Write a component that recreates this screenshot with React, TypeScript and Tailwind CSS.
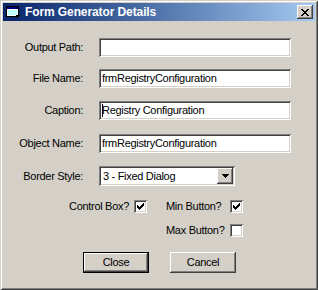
const sunken =
  'shadow-[inset_1px_1px_0_#808080,inset_-1px_-1px_0_#ffffff,inset_2px_2px_0_#404040,inset_-2px_-2px_0_#d4d0c8]';
const raised =
  'shadow-[inset_-1px_-1px_0_#404040,inset_1px_1px_0_#ffffff,inset_-2px_-2px_0_#808080,inset_2px_2px_0_#d4d0c8]';

// pixel-art glyph -> svg path
function pixels(rows: string[]) {
  let d = '';
  rows.forEach((row, y) => {
    row.split('').forEach((c, x) => {
      if (c === 'X') d += `M${x} ${y}h1v1h-1z`;
    });
  });
  return d;
}

const CHECK = pixels([
  '......X',
  '.....XX',
  'X...XXX',
  'XX.XXX.',
  'XXXXX..',
  '.XXX...',
  '..X....',
]);

const CLOSE_X = pixels([
  'XX....XX',
  '.XX..XX.',
  '..XXXX..',
  '...XX...',
  '..XXXX..',
  '.XX..XX.',
  'XX....XX',
]);

const ARROW = pixels(['XXXXXXX', '.XXXXX.', '..XXX..', '...X...']);

function Checkbox({ checked }: { checked: boolean }) {
  return (
    <div className={`w-[13px] h-[13px] bg-white shrink-0 flex items-center justify-center ${sunken}`}>
      {checked && (
        <svg width="7" height="7" viewBox="0 0 7 7" shapeRendering="crispEdges">
          <path d={CHECK} fill="#000" />
        </svg>
      )}
    </div>
  );
}

function Field({ label, value, cursor }: { label: string; value: string; cursor?: boolean }) {
  return (
    <div className="flex items-center h-[19px]">
      <div className="w-[80px] text-right">{label}</div>
      <div className={`ml-[16px] w-[192px] h-[19px] bg-white flex items-center pl-[3px] ${sunken}`}>
        {cursor && <div className="w-px h-[13px] bg-black -mr-px" />}
        {value}
      </div>
    </div>
  );
}

function CheckItem({ label, checked, width }: { label: string; checked: boolean; width: string }) {
  return (
    <div className={`flex items-center justify-between h-[13px] ${width}`}>
      <span>{label}</span>
      <Checkbox checked={checked} />
    </div>
  );
}

export default function App() {
  return (
    <div
      className="w-[318px] h-[290px] bg-[#d4d0c8] p-[3px] flex flex-col text-[11px] leading-[13px] tracking-[-0.3px] text-black font-['Liberation_Sans',Arial,sans-serif] shadow-[inset_1px_1px_0_#d4d0c8,inset_-1px_-1px_0_#404040,inset_2px_2px_0_#ffffff,inset_-2px_-2px_0_#808080]"
    >
      {/* Title bar */}
      <div className="h-[18px] flex items-center bg-gradient-to-r from-[#0a246a] to-[#a6caf0] pl-[2px] pr-[2px]">
        <svg width="16" height="16" viewBox="0 0 16 16" shapeRendering="crispEdges">
          <rect x="1.5" y="2.5" width="12" height="10" fill="#ffffff" stroke="#000" />
          <rect x="2" y="3" width="11" height="2" fill="#000080" />
          <rect x="3" y="6" width="9" height="5" fill="#c0ffff" />
          <path d="M11 11h4v1h-1v1h-1v1h-1v-1h-1z" fill="#000" />
        </svg>
        <span className="ml-[4px] text-white font-bold text-[12px] tracking-[-0.1px]">Form Generator Details</span>
        <div className={`ml-auto w-[16px] h-[14px] bg-[#d4d0c8] flex items-center justify-center ${raised}`}>
          <svg width="8" height="7" viewBox="0 0 8 7" shapeRendering="crispEdges">
            <path d={CLOSE_X} fill="#000" />
          </svg>
        </div>
      </div>

      {/* Fields */}
      <div className="flex flex-col pt-[17px]">
        <Field label="Output Path:" value="" />
        <div className="mt-[12px]">
          <Field label="File Name:" value="frmRegistryConfiguration" />
        </div>
        <div className="mt-[13px]">
          <Field label="Caption:" value="Registry Configuration" cursor />
        </div>
        <div className="mt-[14px]">
          <Field label="Object Name:" value="frmRegistryConfiguration" />
        </div>

        <div className="mt-[13px] flex items-center h-[20px]">
          <div className="w-[80px] text-right">Border Style:</div>
          <div className={`ml-[16px] w-[136px] h-[20px] bg-white flex items-center p-[2px] ${sunken}`}>
            <span className="pl-[2px] flex-1">3 - Fixed Dialog</span>
            <div className={`w-[16px] h-[16px] bg-[#d4d0c8] flex items-center justify-center ${raised}`}>
              <svg width="7" height="4" viewBox="0 0 7 4" shapeRendering="crispEdges">
                <path d={ARROW} fill="#000" />
              </svg>
            </div>
          </div>
        </div>

        {/* Checkboxes */}
        <div className="mt-[14px] flex items-center ml-[66px] gap-[19px]">
          <CheckItem label="Control Box?" checked width="w-[78px]" />
          <CheckItem label="Min Button?" checked width="w-[77px]" />
        </div>
        <div className="mt-[11px] flex items-center ml-[163px]">
          <CheckItem label="Max Button?" checked={false} width="w-[77px]" />
        </div>

        {/* Buttons */}
        <div className="mt-[15px] flex items-center ml-[80px] gap-[21px]">
          <div className="w-[66px] h-[21px] border border-black bg-[#d4d0c8]">
            <div className={`w-full h-full flex items-center justify-center ${raised}`}>Close</div>
          </div>
          <div className={`w-[66px] h-[21px] bg-[#d4d0c8] flex items-center justify-center ${raised}`}>
            Cancel
          </div>
        </div>
      </div>
    </div>
  );
}
